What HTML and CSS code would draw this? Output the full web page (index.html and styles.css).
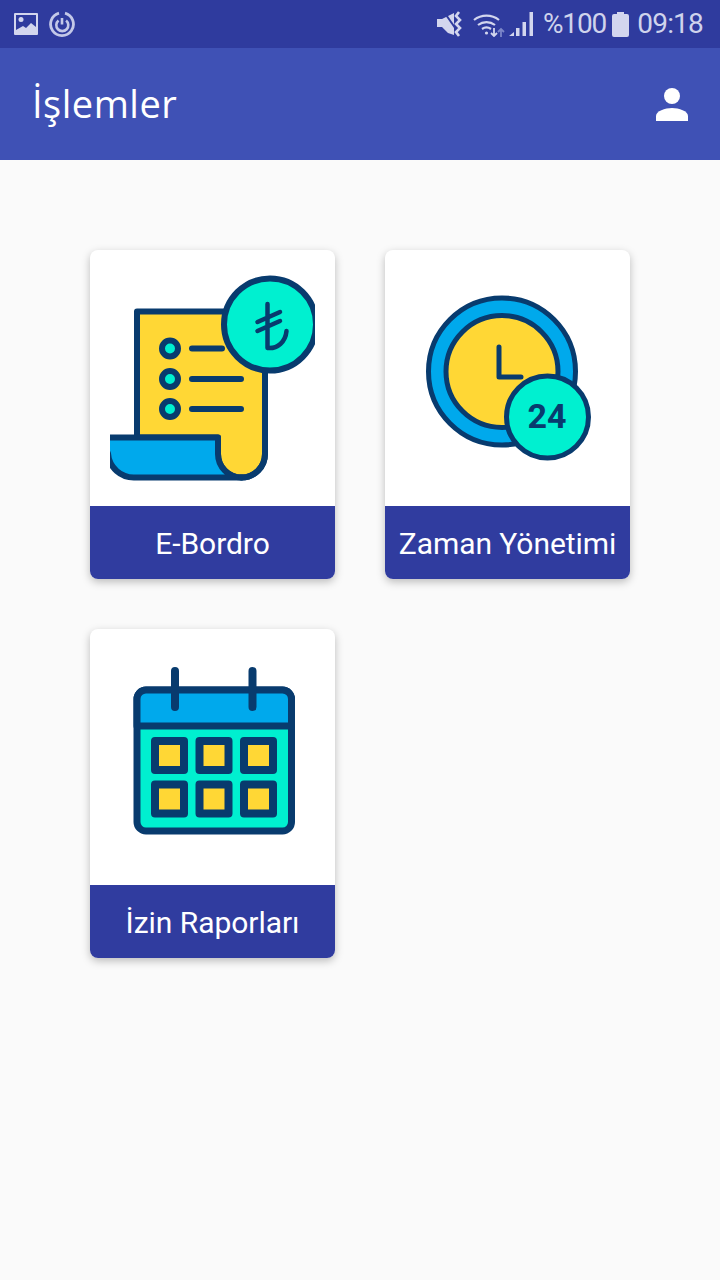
FILE: index.html
```html
<!DOCTYPE html>
<html lang="tr">
<head>
    <meta charset="UTF-8">
    <meta name="viewport" content="width=device-width, initial-scale=1.0">
    <title>İşlemler</title>
    <link rel="stylesheet" href="styles.css">
</head>
<body>
    <div class="wrapper">
        <div class="status-bar">
            <div class="status-left">
                <svg class="ic-image" width="24" height="22" viewBox="0 0 24 22">
                    <path fill="#d3d6ee" d="M1 0h22a1 1 0 0 1 1 1v20a1 1 0 0 1-1 1H1a1 1 0 0 1-1-1V1a1 1 0 0 1 1-1z"/>
                    <path fill="#2f3b9e" d="M2 2h20v12l-5-4-5 5-3-2-7 4z"/>
                    <circle cx="7" cy="6.5" r="2.5" fill="#d3d6ee"/>
                </svg>
                <svg class="ic-ring" width="26" height="26" viewBox="0 0 26 26" fill="none" stroke="#c3c8e8">
                    <path stroke-width="2.8" d="M16 2.200A11.400 11.400 0 1 1 10 2.200"/>
                    <path stroke-width="2.6" d="M9.500 9.500a6 6 0 1 0 7.600 0"/>
                    <path stroke-width="2.6" d="M13 7v6.500"/>
                </svg>
            </div>
            <div class="status-right">
                <svg class="ic-mute" width="27" height="26" viewBox="0 0 27 26">
                    <path fill="#d3d6ee" d="M1 8h5l12-6v22l-6-2-6-6H1z"/>
                    <path stroke="#2f3b9e" stroke-width="2" d="M8 1l14 20"/>
                    <path fill="none" stroke="#d3d6ee" stroke-width="2.600" d="M23 1l-3 4 4 4-4 4 4 4-4 4 3 4"/>
                </svg>
                <svg class="ic-wifi" width="36" height="26" viewBox="0 0 36 26" fill="none" stroke="#d3d6ee">
                    <path stroke-width="2.200" d="M1 9a20 20 0 0 1 25 0"/>
                    <path stroke-width="2.200" d="M5 14a14 14 0 0 1 17 0"/>
                    <path stroke-width="2.200" d="M9 18a8 8 0 0 1 9 0"/>
                    <circle cx="13.500" cy="22" r="1.600" fill="#d3d6ee" stroke="none"/>
                    <path stroke-width="1.800" d="M21 17v8m-3-3l3 3 3-3"/>
                    <path stroke="#7c86c8" stroke-width="1.800" d="M28 26v-8m-3 3l3-3 3 3"/>
                </svg>
                <svg class="ic-signal" width="25" height="26" viewBox="0 0 25 26" fill="#d3d6ee">
                    <path d="M0 25l5-4v4z"/>
                    <rect x="7" y="17" width="3.500" height="8"/>
                    <rect x="13.500" y="11" width="3.500" height="14"/>
                    <rect x="20.500" y="1" width="3.500" height="24"/>
                </svg>
                <span class="battery-text">%100</span>
                <svg class="ic-battery" width="17" height="26" viewBox="0 0 17 26">
                    <path fill="#d3d6ee" d="M5 1h7v2h3a2 2 0 0 1 2 2v19a2 2 0 0 1-2 2H2a2 2 0 0 1-2-2V5a2 2 0 0 1 2-2h3z"/>
                </svg>
                <span class="clock">09:18</span>
            </div>
        </div>

        <header class="app-bar">
            <h1>İşlemler</h1>
            <svg class="ic-user" width="32" height="34" viewBox="0 0 32 34">
                <circle cx="16" cy="9" r="8" fill="#fff"/>
                <path fill="#fff" d="M0 34v-5c0-5 9-8 16-8s16 3 16 8v5z"/>
            </svg>
        </header>

        <main class="menu-grid">
            <a class="card" href="#">
                <div class="card-image">
                    <svg width="245" height="256" viewBox="0 0 245 256" stroke-linecap="round" stroke-linejoin="round">
                        <defs><clipPath id="clipReceipt"><rect x="20" y="0" width="205" height="256"/></clipPath></defs>
                        <g clip-path="url(#clipReceipt)" stroke="#083b6e" stroke-width="6">
                            <path fill="#ffd735" d="M47 187.500V61.500h128V204a23.500 23.500 0 0 1-47 0v-16.500z"/>
                            <path fill="#00a9ec" d="M10 187.500h118V204a23.500 23.500 0 0 0 23.500 23.500H45a26 26 0 0 1-27-24z"/>
                            <path fill="none" d="M151.500 227.500a23.500 23.500 0 0 0 23.500-23.500"/>
                            <g fill="#00f0d0">
                                <circle cx="80" cy="98.500" r="8"/>
                                <circle cx="80" cy="129" r="8"/>
                                <circle cx="80" cy="159" r="8"/>
                                <circle cx="180" cy="74.500" r="46"/>
                            </g>
                            <path fill="none" d="M102 98.500h30M102 129h49M102 159h49"/>
                            <path fill="none" stroke-width="4.500" d="M177.500 54v44c10 1 18-6 19-17M167.500 72l22.500-10M167.500 81l22.500-10"/>
                        </g>
                    </svg>
                </div>
                <div class="card-label">E-Bordro</div>
            </a>

            <a class="card" href="#">
                <div class="card-image">
                    <svg width="245" height="256" viewBox="0 0 245 256" stroke="#083b6e" stroke-linecap="round" stroke-linejoin="round">
                        <circle cx="117" cy="121.500" r="73.500" fill="#00a9ec" stroke-width="5"/>
                        <circle cx="117" cy="121.500" r="56" fill="#ffd735" stroke-width="5"/>
                        <path fill="none" stroke-width="5" d="M114 97v30h22"/>
                        <circle cx="162.500" cy="167" r="41" fill="#00f0d0" stroke-width="5"/>
                        <text class="badge-num" x="162" y="178">24</text>
                    </svg>
                </div>
                <div class="card-label">Zaman Yönetimi</div>
            </a>

            <a class="card" href="#">
                <div class="card-image">
                    <svg width="245" height="256" viewBox="0 0 245 256" stroke="#083b6e" stroke-width="7" stroke-linejoin="round">
                        <rect x="47" y="61" width="154.500" height="141" rx="9" fill="#00f0d0"/>
                        <path fill="#00a9ec" d="M47 97V70a9 9 0 0 1 9-9h136.500a9 9 0 0 1 9 9v27z"/>
                        <g fill="#ffd735" stroke-width="8">
                            <rect x="65" y="112" width="29" height="29"/>
                            <rect x="109.500" y="112" width="29" height="29"/>
                            <rect x="154" y="112" width="29" height="29"/>
                            <rect x="65" y="155.500" width="29" height="29"/>
                            <rect x="109.500" y="155.500" width="29" height="29"/>
                            <rect x="154" y="155.500" width="29" height="29"/>
                        </g>
                        <path fill="none" stroke-width="8" stroke-linecap="round" d="M85 42v36M162.500 42v36"/>
                    </svg>
                </div>
                <div class="card-label">İzin Raporları</div>
            </a>
        </main>
    </div>
</body>
</html>
```
FILE: styles.css
```css
*{box-sizing: border-box;}
body{margin:0;background-color:#fafafa;font-family:Roboto,"Liberation Sans",sans-serif;}
a{text-decoration:none;color:inherit;}

.wrapper{
    min-height:1280px;
}

/* status bar */
.status-bar{
    height:48px;
    background-color:#2f3b9e;
    display:flex;
    justify-content:space-between;
    align-items:center;
    padding:0 17px 0 14px;
    color:#cfd3ec;
}
.status-left{
    display:flex;
    align-items:center;
    gap:11px;
}
.status-right{
    display:flex;
    align-items:center;
}
.status-right svg{display:block;}
.ic-wifi{margin-left:10px;}
.battery-text{
    margin-left:9px;
    font-size:28px;
    letter-spacing:-1.1px;
    line-height:48px;
}
.ic-battery{margin-left:6px;}
.clock{
    margin-left:8px;
    font-size:28px;
    letter-spacing:-.8px;
    line-height:48px;
}

/* app bar */
.app-bar{
    height:112px;
    background-color:#3f51b5;
    display:flex;
    justify-content:space-between;
    align-items:center;
    padding:0 32px;
}
.app-bar h1{
    margin:0 0 3px;
    font-family:"Open Sans",sans-serif;
    font-weight:400;
    font-size:38px;
    letter-spacing:.5px;
    color:#fff;
}

/* menu */
.menu-grid{
    display:grid;
    grid-template-columns:245px 245px;
    gap:50px;
    padding:90px 0 0 90px;
}
.card{
    display:block;
    height:329px;
    border-radius:8px;
    overflow:hidden;
    background-color:#fff;
    box-shadow:0 3px 8px rgba(0,0,0,.25);
}
.card-image{
    height:256px;
}
.card-image svg{display:block;}
.card-label{
    height:73px;
    line-height:75px;
    text-align:center;
    font-size:30px;
    letter-spacing:-.05px;
    color:#fff;
    background-color:#303c9f;
}
.badge-num{
    font-family:Roboto,sans-serif;
    font-weight:700;
    font-size:34px;
    text-anchor:middle;
    fill:#083b6e;
    stroke:none;
}
```
